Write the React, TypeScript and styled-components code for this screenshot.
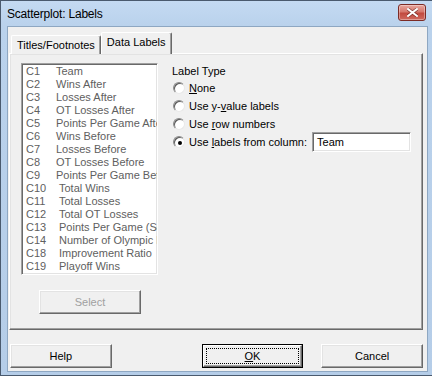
import React from 'react'
import styled, { createGlobalStyle, css } from 'styled-components'

const GlobalStyle = createGlobalStyle`
  html, body {
    margin: 0;
    padding: 0;
    background: #ffffff;
  }
  body {
    font-family: 'Liberation Sans', Arial, sans-serif;
    font-size: 11px;
    color: #000;
  }
`

const columns = [
  { code: 'C1', name: 'Team' },
  { code: 'C2', name: 'Wins After' },
  { code: 'C3', name: 'Losses After' },
  { code: 'C4', name: 'OT Losses After' },
  { code: 'C5', name: 'Points Per Game After' },
  { code: 'C6', name: 'Wins Before' },
  { code: 'C7', name: 'Losses Before' },
  { code: 'C8', name: 'OT Losses Before' },
  { code: 'C9', name: 'Points Per Game Before' },
  { code: 'C10', name: 'Total Wins' },
  { code: 'C11', name: 'Total Losses' },
  { code: 'C12', name: 'Total OT Losses' },
  { code: 'C13', name: 'Points Per Game (Season)' },
  { code: 'C14', name: 'Number of Olympic Players' },
  { code: 'C18', name: 'Improvement Ratio' },
  { code: 'C19', name: 'Playoff Wins' },
]

const raised = css`
  border: 1px solid;
  border-color: #ffffff #696969 #696969 #ffffff;
  box-shadow: inset -1px -1px 0 #a0a0a0, inset 1px 1px 0 #e3e3e3;
`

const sunken = css`
  border: 1px solid;
  border-color: #a0a0a0 #ffffff #ffffff #a0a0a0;
  box-shadow: inset 1px 1px 0 #696969, inset -1px -1px 0 #e3e3e3;
`

const Window = styled.div`
  width: 432px;
  height: 376px;
  box-sizing: border-box;
  display: flex;
  flex-direction: column;
  border: 1px solid #4a5a6e;
  border-right: none;
  background: linear-gradient(to bottom, #c4daf2 0px, #bad2ec 24px, #b5cde8 100%);
`

const TitleBar = styled.div`
  height: 25px;
  flex: none;
  display: flex;
  align-items: center;
  justify-content: space-between;
  padding: 0 6px 0 6px;
`

const TitleText = styled.div`
  font-size: 12px;
  letter-spacing: -0.2px;
  color: #000;
`

const CloseButton = styled.div`
  width: 28px;
  height: 17px;
  margin-top: -3px;
  box-sizing: border-box;
  border: 1px solid #7c2b25;
  border-radius: 3px;
  background: linear-gradient(to bottom, #e8a79f 0%, #d6786d 45%, #c24a3f 55%, #cf6a5f 100%);
  box-shadow: inset 0 0 0 1px rgba(255, 255, 255, 0.35);
  display: flex;
  align-items: center;
  justify-content: center;
`

const Client = styled.div`
  flex: 1;
  margin: 0 4px 3px 6px;
  background: #f0f0f0;
  border: 1px solid #8ea7c2;
  display: flex;
  flex-direction: column;
  padding: 5px 4px 0 1px;
`

const TabRow = styled.div`
  display: flex;
  align-items: flex-end;
  height: 21px;
  padding-left: 2px;
  position: relative;
  z-index: 1;
`

const Tab = styled.div<{ $active?: boolean }>`
  box-sizing: border-box;
  height: ${(p) => (p.$active ? '22px' : '19px')};
  padding: 0 5px ${(p) => (p.$active ? '3px' : '0')} 5px;
  margin-bottom: -1px;
  display: flex;
  align-items: center;
  background: #f0f0f0;
  border-top: 1px solid #ffffff;
  border-left: 1px solid #ffffff;
  border-right: 1px solid #696969;
  box-shadow: inset -1px 0 0 #a0a0a0;
  border-radius: 2px 2px 0 0;
`

const Panel = styled.div`
  height: 277px;
  box-sizing: border-box;
  ${raised};
  display: flex;
  padding: 9px 0 0 11px;
`

const LeftColumn = styled.div`
  display: flex;
  flex-direction: column;
`

const ListBox = styled.div`
  width: 137px;
  height: 212px;
  box-sizing: border-box;
  ${sunken};
  background: #ffffff;
  padding: 1px 0 0 4px;
  overflow: hidden;
`

const ListRow = styled.div`
  height: 13px;
  line-height: 13px;
  white-space: nowrap;
  color: #606060;
  display: flex;
`

const Code = styled.span<{ $wide?: boolean }>`
  width: ${(p) => (p.$wide ? '33px' : '30px')};
  flex: none;
`

const Button = styled.div<{ $disabled?: boolean }>`
  width: 102px;
  height: 24px;
  box-sizing: border-box;
  ${raised};
  background: #f0f0f0;
  display: flex;
  align-items: center;
  justify-content: center;
  color: ${(p) => (p.$disabled ? '#a0a0a0' : '#000')};
`

const DefaultButton = styled.div`
  width: 102px;
  height: 24px;
  box-sizing: border-box;
  border: 1px solid #000;
  background: #f0f0f0;
  display: flex;
`

const DefaultInner = styled.div`
  flex: 1;
  border: 1px solid;
  border-color: #ffffff #696969 #696969 #ffffff;
  box-shadow: inset -1px -1px 0 #a0a0a0;
  padding: 2px;
  display: flex;
`

const FocusRect = styled.div`
  flex: 1;
  border: 1px dotted #000;
  display: flex;
  align-items: center;
  justify-content: center;
`

const SelectWrap = styled.div`
  margin: 15px 0 0 18px;
`

const RightColumn = styled.div`
  margin-left: 14px;
  padding-top: 2px;
  display: flex;
  flex-direction: column;
`

const GroupLabel = styled.div`
  height: 13px;
  line-height: 13px;
  margin-bottom: 1px;
`

const RadioRow = styled.div`
  height: 18px;
  display: flex;
  align-items: center;
`

const RadioCircle = styled.div<{ $checked?: boolean }>`
  width: 12px;
  height: 12px;
  box-sizing: border-box;
  border-radius: 50%;
  border: 1px solid;
  border-color: #8a8a8a #e8e8e8 #e8e8e8 #8a8a8a;
  background: #ffffff;
  box-shadow: inset 1px 1px 0 #5a5a5a;
  display: flex;
  align-items: center;
  justify-content: center;
  margin: 0 4px 0 1px;
  &::after {
    content: '';
    display: ${(p) => (p.$checked ? 'block' : 'none')};
    width: 4px;
    height: 4px;
    border-radius: 50%;
    background: #000;
    margin: 1px 0 0 1px;
  }
`

const TextField = styled.div`
  width: 99px;
  height: 20px;
  box-sizing: border-box;
  ${sunken};
  background: #ffffff;
  margin-left: 5px;
  padding-left: 4px;
  display: flex;
  align-items: center;
`

const Footer = styled.div`
  display: flex;
  align-items: center;
  margin-top: 14px;
  padding-left: 1px;
`

const Spacer = styled.div<{ $w: number }>`
  width: ${(p) => p.$w}px;
  flex: none;
`

const radios = [
  { pre: '', key: 'N', post: 'one' },
  { pre: 'Use y-', key: 'v', post: 'alue labels' },
  { pre: 'Use ', key: 'r', post: 'ow numbers' },
  { pre: 'Use ', key: 'l', post: 'abels from column:' },
]

export default function App() {
  return (
    <>
      <GlobalStyle />
      <Window>
        <TitleBar>
          <TitleText>Scatterplot: Labels</TitleText>
          <CloseButton>
            <svg width="11" height="9" viewBox="0 0 11 9">
              <path
                d="M1 1 L10 8 M10 1 L1 8"
                stroke="#4a1410"
                strokeWidth="3.4"
                strokeLinecap="square"
                opacity="0.55"
              />
              <path d="M1 1 L10 8 M10 1 L1 8" stroke="#ffffff" strokeWidth="2" strokeLinecap="square" />
            </svg>
          </CloseButton>
        </TitleBar>
        <Client>
          <TabRow>
            <Tab>Titles/Footnotes</Tab>
            <Tab $active>Data Labels</Tab>
          </TabRow>
          <Panel>
            <LeftColumn>
              <ListBox>
                {columns.map((c) => (
                  <ListRow key={c.code}>
                    <Code $wide={c.code.length > 2}>{c.code}</Code>
                    <span>{c.name}</span>
                  </ListRow>
                ))}
              </ListBox>
              <SelectWrap>
                <Button $disabled>Select</Button>
              </SelectWrap>
            </LeftColumn>
            <RightColumn>
              <GroupLabel>Label Type</GroupLabel>
              {radios.map((r, i) => (
                <RadioRow key={i}>
                  <RadioCircle $checked={i === 3} />
                  <span>
                    {r.pre}
                    <u>{r.key}</u>
                    {r.post}
                  </span>
                  {i === 3 && <TextField>Team</TextField>}
                </RadioRow>
              ))}
            </RightColumn>
          </Panel>
          <Footer>
            <Button>Help</Button>
            <Spacer $w={90} />
            <DefaultButton>
              <DefaultInner>
                <FocusRect>
                  <span>
                    <u>O</u>K
                  </span>
                </FocusRect>
              </DefaultInner>
            </DefaultButton>
            <Spacer $w={18} />
            <Button>Cancel</Button>
          </Footer>
        </Client>
      </Window>
    </>
  )
}
